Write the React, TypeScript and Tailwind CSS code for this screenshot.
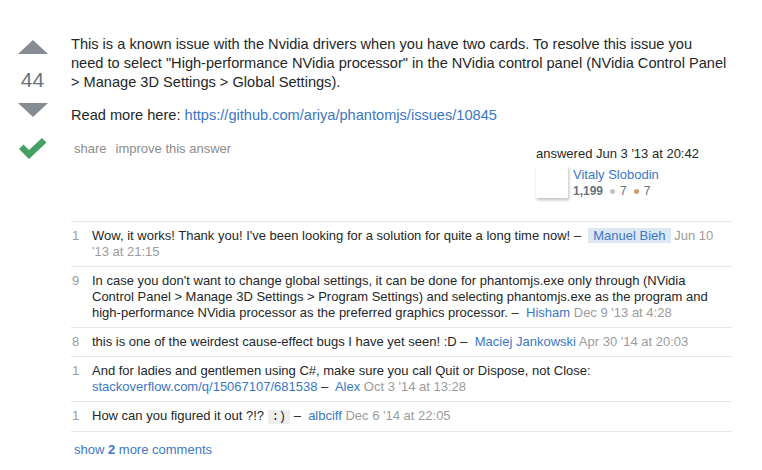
import React from "react";

const link = "text-[#3b77c6]";
const date = "text-[#9c9c9c]";

const comments: { score: number; body: React.ReactNode }[] = [
  {
    score: 1,
    body: (
      <>
        Wow, it works! Thank you! I&apos;ve been looking for a solution for quite a long time now! –&nbsp;{" "}
        <span className={`${link} bg-[#dde8f3] px-[5px]`}>Manuel Bieh</span>{" "}
        <span className={date}>Jun 10 &apos;13 at 21:15</span>
      </>
    ),
  },
  {
    score: 9,
    body: (
      <>
        In case you don&apos;t want to change global settings, it can be done for phantomjs.exe only through (NVidia
        Control Panel &gt; Manage 3D Settings &gt; Program Settings) and selecting phantomjs.exe as the program and
        high-performance NVidia processor as the preferred graphics processor. –&nbsp;{" "}
        <span className={link}>Hisham</span> <span className={date}>Dec 9 &apos;13 at 4:28</span>
      </>
    ),
  },
  {
    score: 8,
    body: (
      <>
        this is one of the weirdest cause-effect bugs I have yet seen! :D –&nbsp;{" "}
        <span className={link}>Maciej Jankowski</span> <span className={date}>Apr 30 &apos;14 at 20:03</span>
      </>
    ),
  },
  {
    score: 1,
    body: (
      <>
        And for ladies and gentlemen using C#, make sure you call Quit or Dispose, not Close:{" "}
        <span className={link}>stackoverflow.com/q/15067107/681538</span> –&nbsp;{" "}
        <span className={link}>Alex</span> <span className={date}>Oct 3 &apos;14 at 13:28</span>
      </>
    ),
  },
  {
    score: 1,
    body: (
      <>
        How can you figured it out ?!?{" "}
        <code className="bg-[#eeeeee] px-[4px] font-['Liberation_Mono',monospace] text-[12px] leading-[16px]">:)</code>{" "}
        –&nbsp; <span className={link}>albciff</span> <span className={date}>Dec 6 &apos;14 at 22:05</span>
      </>
    ),
  },
];

function Arrow({ down }: { down?: boolean }) {
  return (
    <svg width="30" height="14" viewBox="0 0 30 14">
      <polygon points={down ? "0,0 30,0 15,14" : "15,0 30,14 0,14"} fill="#858c93" />
    </svg>
  );
}

export default function App() {
  return (
    <div className="w-[762px] h-[470px] bg-white font-['Liberation_Sans',Arial,sans-serif] text-[#242729] pt-[35px]">
      <div className="flex">
        <div className="w-[71px] pr-[6px] flex flex-col items-center">
          <div className="mt-[5px]">
            <Arrow />
          </div>
          <div className="mt-[13px] text-[21px] leading-[25px] text-[#6a737c]">44</div>
          <div className="mt-[11px]">
            <Arrow down />
          </div>
          <svg className="mt-[21px]" width="28" height="21" viewBox="0 0 28 21">
            <path d="M0 11 L4.5 6.5 L10 12 L23 0 L27.5 4.5 L10 21 Z" fill="#45a163" />
          </svg>
        </div>

        <div className="w-[661px]">
          <p className="text-[14.6px] leading-[18.75px] whitespace-nowrap">
            This is a known issue with the Nvidia drivers when you have two cards. To resolve this issue you
            <br />
            need to select &quot;High-performance NVidia processor&quot; in the NVidia control panel (NVidia Control Panel
            <br />
            &gt; Manage 3D Settings &gt; Global Settings).
          </p>
          <p className="mt-[15px] text-[14.6px] leading-[18.75px]">
            Read more here: <span className={link}>https://github.com/ariya/phantomjs/issues/10845</span>
          </p>

          <div className="mt-[15px] flex justify-between items-start">
            <div className="pl-[3px] text-[13px] leading-[17px] text-[#8d8d8d] flex gap-[9px]">
              <span>share</span>
              <span>improve this answer</span>
            </div>
            <div className="w-[200px] pt-[5px] pl-[4px] text-[13px] leading-[17px]">
              <div>answered Jun 3 &apos;13 at 20:42</div>
              <div className="mt-[4px] flex gap-[5px]">
                <div className="w-[32px] h-[32px] bg-white shadow-[1px_2px_3px_rgba(0,0,0,0.25)]" />
                <div>
                  <div className={link}>Vitaly Slobodin</div>
                  <div className="text-[12px] leading-[17px] text-[#6a737c] flex items-center gap-[7px]">
                    <span className="font-bold">1,199</span>
                    <span className="flex items-center gap-[5px]">
                      <span className="w-[5px] h-[5px] rounded-full bg-[#c4c4c4]" />
                      7
                    </span>
                    <span className="flex items-center gap-[5px]">
                      <span className="w-[5px] h-[5px] rounded-full bg-[#d39a6a]" />
                      7
                    </span>
                  </div>
                </div>
              </div>
            </div>
          </div>

          <div className="mt-[21px] border-t border-[#e6e6e6]">
            {comments.map((c, i) => (
              <div key={i} className="flex border-b border-[#e6e6e6] py-[6px] text-[13px] leading-[16px]">
                <div className="w-[21px] shrink-0 pl-[1px] text-[#9c9c9c]">{c.score}</div>
                <div className="pr-[12px]">{c.body}</div>
              </div>
            ))}
          </div>
          <div className={`mt-[9px] pl-[3px] text-[13px] leading-[17px] ${link}`}>
            show <span className="font-bold">2</span> more comments
          </div>
        </div>
      </div>
    </div>
  );
}
